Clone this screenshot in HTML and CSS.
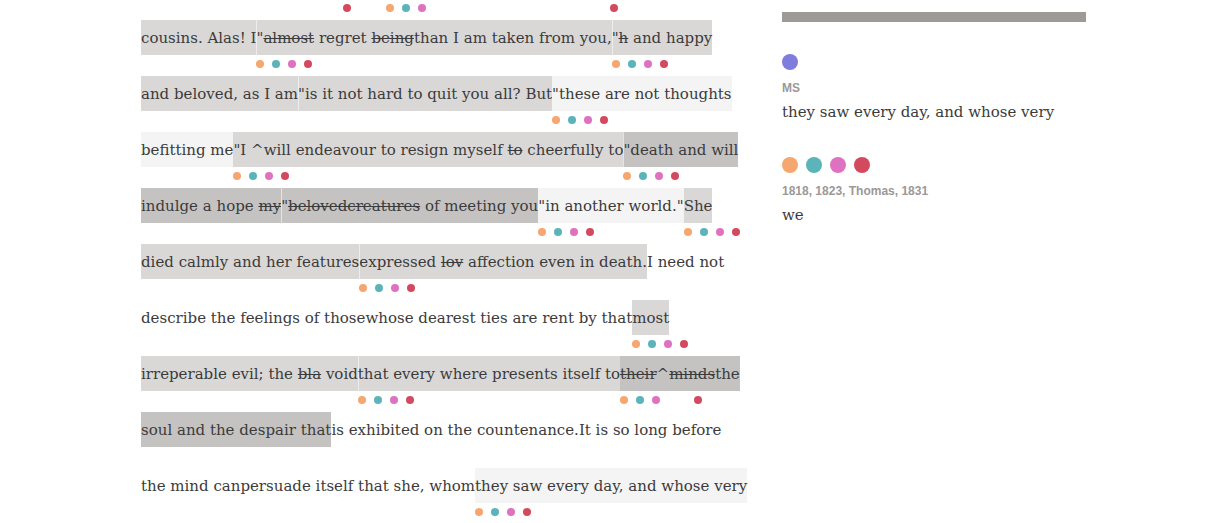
FILE: index.html
```html
<!DOCTYPE html>
<html lang="en">
<head>
<meta charset="utf-8">
<title>Collation</title>
<link rel="stylesheet" href="styles.css">
</head>
<body>
<div class="page">
  <main class="text-col">
    <div class="dots top-dots">
      <span class="dot red m-202"></span>
      <span class="dot orange m-27"></span>
      <span class="dot teal"></span>
      <span class="dot pink"></span>
      <span class="dot red m-176"></span>
    </div>

    <div class="line">
      <span class="seg light">cousins. Alas! I</span>
      <span class="seg light sep">"<s>almost</s> regret <s>being</s>than I am taken from you,<span class="dots"><i class="dot orange"></i><i class="dot teal"></i><i class="dot pink"></i><i class="dot red"></i></span></span>
      <span class="seg light sep">"<s>h</s> and happy<span class="dots"><i class="dot orange"></i><i class="dot teal"></i><i class="dot pink"></i><i class="dot red"></i></span></span>
    </div>

    <div class="line">
      <span class="seg light">and beloved, as I am</span>
      <span class="seg light sep">"is it not hard to quit you all? But</span>
      <span class="seg pale">"these are not thoughts<span class="dots"><i class="dot orange"></i><i class="dot teal"></i><i class="dot pink"></i><i class="dot red"></i></span></span>
    </div>

    <div class="line">
      <span class="seg pale">befitting me</span>
      <span class="seg light">"I ^will endeavour to resign myself <s>to</s> cheerfully to<span class="dots"><i class="dot orange"></i><i class="dot teal"></i><i class="dot pink"></i><i class="dot red"></i></span></span>
      <span class="seg dark sep">"death and will<span class="dots"><i class="dot orange"></i><i class="dot teal"></i><i class="dot pink"></i><i class="dot red"></i></span></span>
    </div>

    <div class="line">
      <span class="seg dark">indulge a hope <s>my</s></span>
      <span class="seg dark sep">"<s>belovedcreatures</s> of meeting you</span>
      <span class="seg pale">"in another world."<span class="dots"><i class="dot orange"></i><i class="dot teal"></i><i class="dot pink"></i><i class="dot red"></i></span></span>
      <span class="seg light">She<span class="dots"><i class="dot orange"></i><i class="dot teal"></i><i class="dot pink"></i><i class="dot red"></i></span></span>
    </div>

    <div class="line">
      <span class="seg light">died calmly and her features</span>
      <span class="seg light sep">expressed <s>lov</s> affection even in death.<span class="dots"><i class="dot orange"></i><i class="dot teal"></i><i class="dot pink"></i><i class="dot red"></i></span></span>
      <span class="seg">I need not</span>
    </div>

    <div class="line">
      <span class="seg">describe the feelings of those</span>
      <span class="seg">whose dearest ties are rent by that</span>
      <span class="seg light">most<span class="dots"><i class="dot orange"></i><i class="dot teal"></i><i class="dot pink"></i><i class="dot red"></i></span></span>
    </div>

    <div class="line">
      <span class="seg light">irreperable evil; the <s>bla</s> void</span>
      <span class="seg light sep">that every where presents itself to<span class="dots"><i class="dot orange"></i><i class="dot teal"></i><i class="dot pink"></i><i class="dot red"></i></span></span>
      <span class="seg dark"><s>their</s>^<s>minds</s>the<span class="dots"><i class="dot orange"></i><i class="dot teal"></i><i class="dot pink"></i><i class="dot red m-26"></i></span></span>
    </div>

    <div class="line">
      <span class="seg dark">soul and the despair that</span>
      <span class="seg">is exhibited on the countenance.</span>
      <span class="seg">It is so long before</span>
    </div>

    <div class="line">
      <span class="seg">the mind can</span>
      <span class="seg">persuade itself that she, whom</span>
      <span class="seg pale">they saw every day, and whose very<span class="dots"><i class="dot orange"></i><i class="dot teal"></i><i class="dot pink"></i><i class="dot red"></i></span></span>
    </div>
  </main>

  <aside class="side">
    <div class="bar"></div>
    <div class="big-dots"><span class="bdot purple"></span></div>
    <div class="label">MS</div>
    <p class="reading">they saw every day, and whose very</p>
    <div class="big-dots second"><span class="bdot orange"></span><span class="bdot teal"></span><span class="bdot pink"></span><span class="bdot red"></span></div>
    <div class="label">1818, 1823, Thomas, 1831</div>
    <p class="reading">we</p>
  </aside>
</div>
</body>
</html>
```

FILE: styles.css
```css
html, body {
  margin: 0;
  padding: 0;
  background: #ffffff;
}

body {
  font-family: "DejaVu Serif", "Liberation Serif", serif;
  color: #3b3b3b;
  overflow: hidden;
}

.page {
  display: flex;
  padding-left: 141px;
}

.text-col {
  width: 641px;
  flex: none;
  padding-top: 4px;
  font-size: 15px;
}

.top-dots {
  display: flex;
  gap: 8px;
  height: 8px;
  margin-bottom: 8px;
}

.line {
  display: flex;
  height: 35px;
  margin-bottom: 21px;
  white-space: nowrap;
}

.seg {
  position: relative;
  display: block;
  box-sizing: border-box;
  height: 35px;
  padding-top: 1px;
  line-height: 34px;
}

.seg.light { background: #dad8d7; }
.seg.dark { background: #c5c3c2; }
.seg.pale { background: #f4f4f4; }

.seg.sep {
  box-shadow: inset 1px 0 0 rgba(255, 255, 255, 0.55);
}

.seg s {
  text-decoration-thickness: 1px;
}

.seg .dots {
  position: absolute;
  left: 0;
  top: calc(100% + 5px);
  display: flex;
  gap: 8px;
}

.dot {
  display: block;
  width: 8px;
  height: 8px;
  border-radius: 50%;
  flex: none;
}

.orange { background: #f6a66f; }
.teal { background: #5bb4b9; }
.pink { background: #de72c0; }
.red { background: #d34a5f; }
.purple { background: #7f7cdd; }

.m-202 { margin-left: 202px; }
.m-27 { margin-left: 27px; }
.m-176 { margin-left: 176px; }
.m-26 { margin-left: 26px; }

.side {
  width: 304px;
  padding-top: 12px;
}

.bar {
  height: 10px;
  background: #9e9a97;
  margin-bottom: 32px;
}

.big-dots {
  display: flex;
  gap: 8px;
  height: 16px;
}

.big-dots.second {
  margin-top: 33px;
}

.bdot {
  width: 16px;
  height: 16px;
  border-radius: 50%;
}

.label {
  font-family: "Liberation Sans", Arial, sans-serif;
  font-weight: bold;
  font-size: 12px;
  line-height: 14px;
  color: #9b9897;
  margin-top: 11px;
}

.reading {
  margin: 5px 0 0;
  font-size: 15px;
  line-height: 24px;
  color: #3b3b3b;
}
```
